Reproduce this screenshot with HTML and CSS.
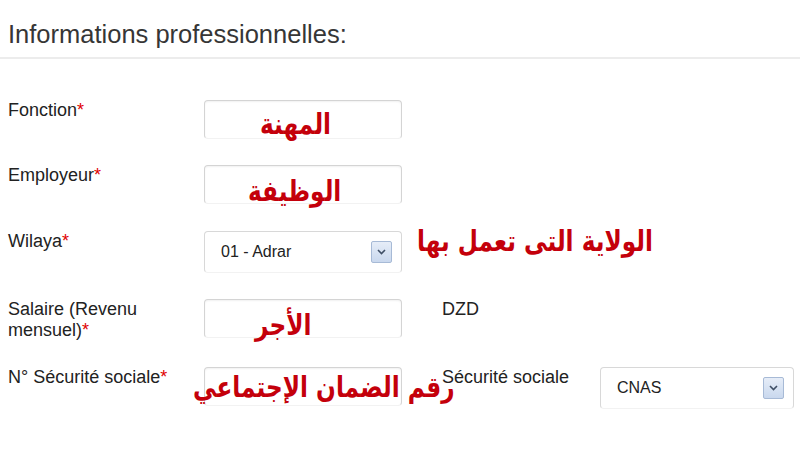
FILE: index.html
```html
<!DOCTYPE html>
<html lang="fr">
<head>
<meta charset="utf-8">
<title>Informations professionnelles</title>
<link rel="stylesheet" href="styles.css">
</head>
<body>
<div class="page">
  <h2 class="title">Informations professionnelles:</h2>
  <div class="form">
    <div class="row">
      <div class="lbl">Fonction<span class="req">*</span></div>
      <div class="field">
        <div class="inp"></div>
        <span class="note note-fonction" lang="ar" dir="rtl">المهنة</span>
      </div>
    </div>
    <div class="row">
      <div class="lbl">Employeur<span class="req">*</span></div>
      <div class="field">
        <div class="inp"></div>
        <span class="note note-employeur" lang="ar" dir="rtl">الوظيفة</span>
      </div>
    </div>
    <div class="row row-sel">
      <div class="lbl">Wilaya<span class="req">*</span></div>
      <div class="field">
        <div class="sel">
          <span class="sel-text">01 - Adrar</span>
          <span class="arrow"><svg width="9" height="6" viewBox="0 0 9 6"><path d="M1 1 L4.5 4.5 L8 1" fill="none" stroke="#3f4f66" stroke-width="1.6"/></svg></span>
        </div>
        <span class="note note-wilaya" lang="ar" dir="rtl">الولاية التى تعمل بها</span>
      </div>
    </div>
    <div class="row">
      <div class="lbl lbl-wrap"><span class="line">Salaire (Revenu</span><span class="line">mensuel)<span class="req">*</span></span></div>
      <div class="field">
        <div class="inp"></div>
        <span class="note note-salaire" lang="ar" dir="rtl">الأجر</span>
      </div>
      <div class="extra">DZD</div>
    </div>
    <div class="row">
      <div class="lbl">N° Sécurité sociale<span class="req">*</span></div>
      <div class="field">
        <div class="inp"></div>
        <span class="note note-nss" lang="ar" dir="rtl">رقم الضمان الإجتماعي</span>
      </div>
      <div class="extra">Sécurité sociale</div>
      <div class="sel sel-cnas">
        <span class="sel-text">CNAS</span>
        <span class="arrow"><svg width="9" height="6" viewBox="0 0 9 6"><path d="M1 1 L4.5 4.5 L8 1" fill="none" stroke="#3f4f66" stroke-width="1.6"/></svg></span>
      </div>
    </div>
  </div>
</div>
</body>
</html>
```
FILE: styles.css
```css
html, body {
  margin: 0;
  padding: 0;
  background: #ffffff;
}
body {
  font-family: "Liberation Sans", Arial, sans-serif;
  color: #222222;
}
.page {
  width: 800px;
  height: 460px;
  overflow: hidden;
}
.title {
  margin: 0;
  padding: 20px 0 9px 8px;
  font-size: 25.5px;
  line-height: 28px;
  font-weight: normal;
  color: #363636;
  border-bottom: 2px solid #ececec;
}
.form {
  margin-top: 41px;
  padding-left: 8px;
  display: flex;
  flex-direction: column;
  gap: 26px;
}
.row {
  display: flex;
  align-items: flex-start;
}
.row-sel {
  margin-top: 1px;
}
.lbl {
  width: 196px;
  flex: none;
  font-size: 18px;
  line-height: 21px;
  color: #222222;
}
.lbl-wrap {
  display: flex;
  flex-direction: column;
}
.line {
  display: block;
}
.req {
  color: #e00000;
}
.field {
  position: relative;
  width: 198px;
  flex: none;
}
.inp {
  box-sizing: border-box;
  height: 39px;
  border: 1px solid #d4d4d4;
  border-bottom-color: #f2f2f2;
  border-radius: 4px;
  box-shadow: inset 0 1px 2px rgba(0, 0, 0, 0.06);
  background: #ffffff;
}
.sel {
  box-sizing: border-box;
  height: 42px;
  border: 1px solid #d8d8d8;
  border-bottom-color: #f2f2f2;
  border-radius: 4px;
  background: #ffffff;
  display: flex;
  align-items: center;
  justify-content: space-between;
  padding: 0 9px 0 16px;
  font-size: 16px;
  color: #222222;
}
.sel-cnas {
  width: 194px;
  flex: none;
}
.arrow {
  box-sizing: border-box;
  width: 21px;
  height: 22px;
  border: 1px solid #a7bad6;
  border-radius: 2px;
  background: linear-gradient(#e6edf8, #c9d8ee);
  display: flex;
  align-items: center;
  justify-content: center;
}
.extra {
  width: 158px;
  flex: none;
  margin-left: 40px;
  font-size: 18px;
  line-height: 21px;
  color: #222222;
}
.note {
  position: absolute;
  font-family: "DejaVu Sans", sans-serif;
  font-weight: bold;
  font-size: 29px;
  color: #c4000b;
  line-height: 1;
  white-space: nowrap;
  transform: scaleX(0.8);
  transform-origin: 0 0;
}
.note-fonction {
  left: 56px;
  top: 10px;
}
.note-employeur {
  left: 44px;
  top: 12px;
}
.note-wilaya {
  left: 213px;
  top: -4px;
}
.note-salaire {
  left: 51px;
  top: 12px;
}
.note-nss {
  left: -11px;
  top: 6px;
}
```
